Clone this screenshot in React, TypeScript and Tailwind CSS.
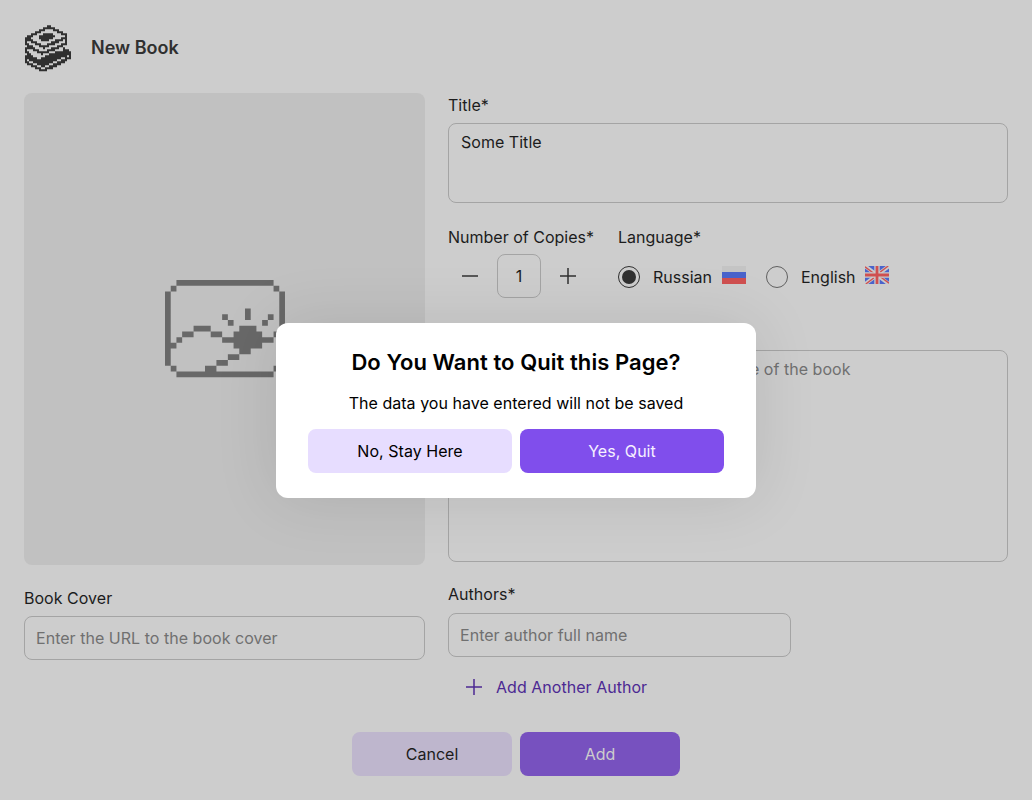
import React from "react";

type Run = [row: number, from: number, to: number];

const BOOKS = [
  "...........XX..........",
  ".........XXXXXX........",
  ".......XXX....XXX......",
  ".....XXX........XXX....",
  "...XXX...XXXXX....XXX..",
  ".XXX...XXXXXXXX.....X..",
  "XXX....XXXXXXX....XXX..",
  "XXXX....XXXX...XXXX.X..",
  "X..XXX.......XXXX...X..",
  "XX...XXX...XXXX...XXX..",
  ".XXX...XXXXX....XXX....",
  "XXXXX....X...XXXX..X...",
  "X...XXX....XXXX....XXX.",
  "XX....XXXXXX...XXXXXXXX",
  ".XX.....X...XXXXXXXXXXX",
  "XXXX......XXXXXXXXXXX.X",
  "XXXXXX..XXXXXXXXXX..XXX",
  "X.XXXXXXXXXXXXXX..XXX..",
  "XX..XXXXXXXXXX..XXXX...",
  ".XXX..XXXXXX..XXXX.....",
  "...XXX..XX..XXXX.......",
  ".....XXX..XXXX.........",
  ".......XXXX............",
];

const BOOK_RUNS: Run[] = BOOKS.flatMap((line, row) =>
  Array.from(line.matchAll(/X+/g), (m): Run => [row, m.index, m.index + m[0].length - 1]),
);

const PICTURE: Run[] = [
  [0, 2, 18], [1, 1, 1], [1, 19, 19],
  [5, 14, 14], [6, 10, 10], [6, 14, 14], [6, 18, 18],
  [7, 11, 11], [7, 17, 17],
  [8, 5, 7], [8, 13, 15],
  [9, 3, 4], [9, 8, 9], [9, 12, 16], [9, 19, 19],
  [10, 2, 2], [10, 10, 18],
  [11, 0, 1], [11, 12, 16],
  [12, 13, 14], [13, 11, 12], [14, 9, 10],
  [15, 1, 1], [15, 7, 8], [15, 19, 19],
  [16, 2, 18],
];

const toPath = (runs: Run[]) =>
  runs.map(([r, a, b]) => `M${a} ${r}h${b - a + 1}v1h${a - b - 1}z`).join("");

function BooksIcon() {
  return (
    <svg className="h-12 w-12" viewBox="-0.5 -0.6 24 24" fill="#303030">
      <path d={toPath(BOOK_RUNS)} />
    </svg>
  );
}

function PictureIcon() {
  return (
    <svg width="120" height="97.14" viewBox="0 0 21 17" fill="#686868">
      <path d={toPath(PICTURE) + "M0 2h1v13h-1zM20 2h1v13h-1z"} />
    </svg>
  );
}

function Plus({ minus = false }: { minus?: boolean }) {
  return (
    <svg className="block" width="16" height="16" viewBox="0 0 16 16" stroke="currentColor" strokeWidth="1.5" fill="none">
      <path d={minus ? "M0 8H16" : "M0 8H16M8 0V16"} />
    </svg>
  );
}

function RussianFlag() {
  return (
    <svg width="24" height="18" viewBox="0 0 24 18">
      <path fill="#c4c4c4" d="M0 0h24v6H0z" />
      <path fill="#4a63cb" d="M0 6h24v6H0z" />
      <path fill="#cf5050" d="M0 12h24v6H0z" />
    </svg>
  );
}

function BritishFlag() {
  return (
    <svg width="24" height="18" viewBox="0 0 24 18">
      <path fill="#4a63cb" d="M0 0h24v18H0z" />
      <path stroke="#cbcbcb" strokeWidth="3.8" d="M0 0 24 18M24 0 0 18" />
      <path stroke="#cf5050" strokeWidth="1.4" d="M0 .8 10 8.3M24 17.2 14 9.7M23.2 0 13 7.7M.8 18 11 10.3" />
      <path stroke="#cbcbcb" strokeWidth="5.4" d="M12 0V18M0 9H24" />
      <path stroke="#cf5050" strokeWidth="2.8" d="M12 0V18M0 9H24" />
    </svg>
  );
}

const field = "block w-full resize-none rounded-lg border border-[#a4a4a4] bg-transparent outline-none placeholder:text-[#707070]";

export default function App() {
  return (
    <div className="relative h-[800px] w-[1032px] overflow-hidden bg-[#cdcdcd] p-6 font-['Inter',sans-serif] text-base leading-6 tracking-[0.03px] text-[#1c1c1c]">
      <header className="flex h-12 items-center gap-[19px]">
        <BooksIcon />
        <h1 className="text-lg font-semibold tracking-normal text-[#303030]">New Book</h1>
      </header>

      <main className="mt-[21px] grid grid-cols-[401px_560px] gap-x-[23px]">
        <section>
          <div className="flex h-[472px] items-center justify-center rounded-lg bg-[#c1c1c1]">
            <PictureIcon />
          </div>
          <label className="mt-[21px] block">Book Cover</label>
          <input className={`${field} mt-1.5 h-11 px-[11px]`} placeholder="Enter the URL to the book cover" />
        </section>

        <section>
          <label className="block">Title*</label>
          <textarea className={`${field} mt-1.5 h-20 px-3 py-1.5`} defaultValue="Some Title" />

          <div className="mt-[22px] flex">
            <div className="w-[170px]">
              <div className="tracking-normal">Number of Copies*</div>
              <div className="mt-[5px] flex items-center">
                <button className="flex h-11 w-[49px] items-center pl-3.5 pr-3 text-[#303030]" aria-label="Fewer"><Plus minus /></button>
                <div className="flex h-11 w-11 items-center justify-center rounded-lg border border-[#a4a4a4]">1</div>
                <button className="flex h-11 w-11 items-center pl-[19px] text-[#303030]" aria-label="More"><Plus /></button>
              </div>
            </div>
            <div>
              <div className="tracking-normal">Language*</div>
              <div className="mt-[5px] flex h-11 items-center pt-0.5 tracking-normal">
                <span className="flex h-[22px] w-[22px] items-center justify-center rounded-full border border-[#303030]">
                  <span className="h-3.5 w-3.5 rounded-full bg-[#303030]" />
                </span>
                <span className="ml-[13px] w-[69px]">Russian</span>
                <span className="-mt-1"><RussianFlag /></span>
                <span className="ml-5 h-[22px] w-[22px] rounded-full border border-[#606060]" />
                <span className="ml-[13px] w-[64px]">English</span>
                <span className="-mt-1"><BritishFlag /></span>
              </div>
            </div>
          </div>

          <label className="mt-[22px] block">Description</label>
          <textarea className={`${field} mt-1.5 h-[212px] px-3.5 py-1.5`} placeholder="Write several words about the storyline of the book" />

          <label className="mt-5 block">Authors*</label>
          <input className={`${field} mt-[7px] h-11 !w-[343px] px-[11px]`} placeholder="Enter author full name" />
          <button className="mt-[18px] ml-[18px] flex items-center gap-3.5 text-[#4c2993]">
            <Plus />
            Add Another Author
          </button>
        </section>
      </main>

      <footer className="mt-[33px] flex justify-center gap-2">
        <button className="h-11 w-40 rounded-lg bg-[#beb6cd]">Cancel</button>
        <button className="h-11 w-40 rounded-lg bg-[#7751bf] text-[#cdcdcd]">Add</button>
      </footer>

      <div role="dialog" className="absolute top-[323px] left-[276px] h-[175px] w-[480px] rounded-xl bg-white px-8 pt-6 text-center text-black shadow-[0_0_64px_rgba(0,0,0,0.1)]">
        <h2 className="text-[22px] leading-[30px] font-semibold tracking-[0.06px]">Do You Want to Quit this Page?</h2>
        <p className="mt-[14px]">The data you have entered will not be saved</p>
        <div className="mt-3.5 flex gap-2">
          <button className="h-11 flex-1 rounded-lg bg-[#e7ddff]">No, Stay Here</button>
          <button className="h-11 flex-1 rounded-lg bg-[#804eec] text-[#f6f1ff]">Yes, Quit</button>
        </div>
      </div>
    </div>
  );
}
